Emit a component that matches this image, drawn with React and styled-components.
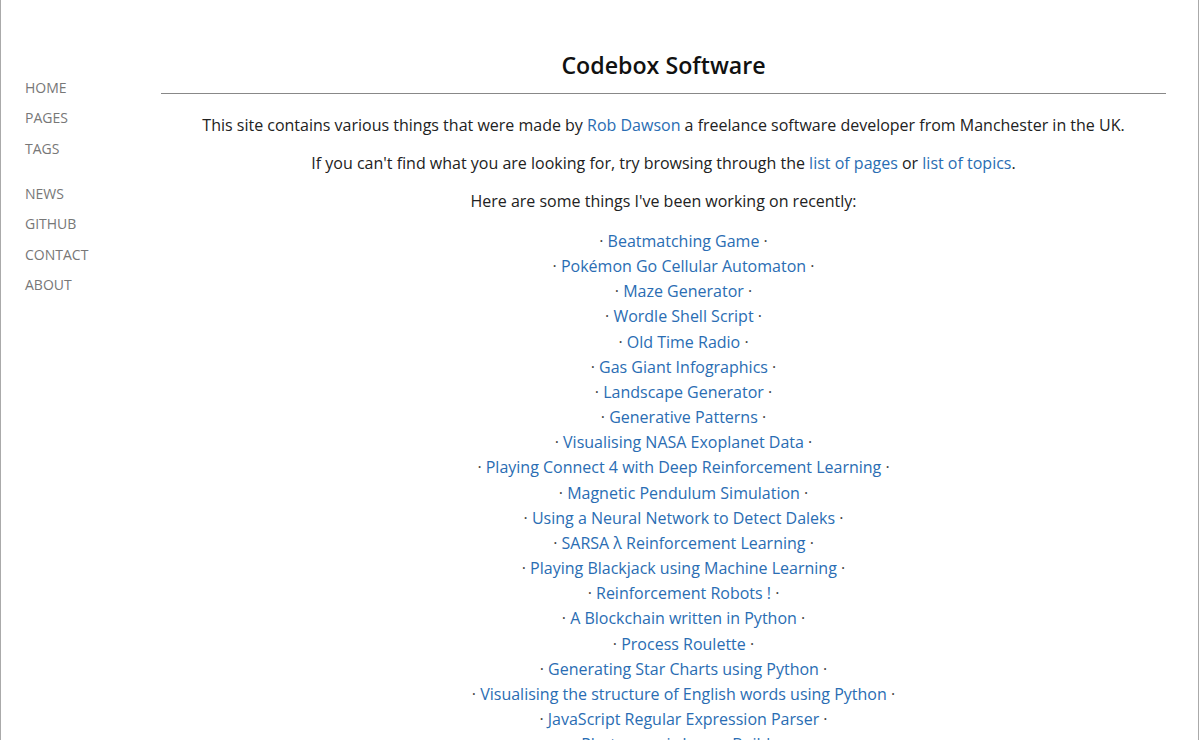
import React from "react";
import styled, { createGlobalStyle } from "styled-components";

const Global = createGlobalStyle`
  html, body { margin: 0; padding: 0; overflow: hidden; background: #fff; }
  body { font-family: "Open Sans", "DejaVu Sans", sans-serif; color: #222; }
  a { text-decoration: none; color: #2a6db3; }
`;

const Page = styled.div`
  box-sizing: border-box;
  width: 1199px;
  min-height: 100vh;
  border-left: 1px solid #aaa;
  border-right: 1px solid #aaa;
  display: flex;
`;

const Nav = styled.nav`
  box-sizing: border-box;
  width: 160px;
  padding: 73px 0 0 24px;
  display: flex;
  flex-direction: column;
  gap: 14.6px;
`;

const NavGroup = styled.ul`
  list-style: none;
  margin: 0;
  padding: 0;
`;

const NavItem = styled.li`
  font-size: 14px;
  line-height: 30.4px;
  text-transform: uppercase;
  a { color: #777; }
`;

const Main = styled.main`
  width: 1005px;
  padding-top: 49px;
  text-align: center;
`;

const Title = styled.h1`
  margin: 0;
  font-size: 23.2px;
  font-weight: 600;
  line-height: 32px;
  color: #111;
  padding-bottom: 12px;
  border-bottom: 1px solid #888;
`;

const Para = styled.p`
  margin: 20px 0 16px;
  font-size: 16px;
  line-height: 22px;
  & + & { margin-top: 0; }
`;

const RecentList = styled.ul`
  list-style: none;
  margin: 0;
  padding: 1px 0 0 40px;
`;

const RecentItem = styled.li`
  font-size: 16px;
  line-height: 25.16px;
  color: #444;
`;

const navGroups = [
  ["Home", "Pages", "Tags"],
  ["News", "Github", "Contact", "About"],
];

const recent = [
  "Beatmatching Game",
  "Pokémon Go Cellular Automaton",
  "Maze Generator",
  "Wordle Shell Script",
  "Old Time Radio",
  "Gas Giant Infographics",
  "Landscape Generator",
  "Generative Patterns",
  "Visualising NASA Exoplanet Data",
  "Playing Connect 4 with Deep Reinforcement Learning",
  "Magnetic Pendulum Simulation",
  "Using a Neural Network to Detect Daleks",
  "SARSA λ Reinforcement Learning",
  "Playing Blackjack using Machine Learning",
  "Reinforcement Robots !",
  "A Blockchain written in Python",
  "Process Roulette",
  "Generating Star Charts using Python",
  "Visualising the structure of English words using Python",
  "JavaScript Regular Expression Parser",
  "Photomosaic Image Builder",
  "Cellular Automata",
];

export default function App() {
  return (
    <>
      <Global />
      <Page>
        <Nav>
          {navGroups.map((g, i) => (
            <NavGroup key={i}>
              {g.map((n) => (
                <NavItem key={n}>
                  <a href="#">{n}</a>
                </NavItem>
              ))}
            </NavGroup>
          ))}
        </Nav>
        <Main>
          <Title>Codebox Software</Title>
          <Para>
            This site contains various things that were made by <a href="#">Rob Dawson</a> a freelance software developer from Manchester in the UK.
          </Para>
          <Para>
            If you can't find what you are looking for, try browsing through the <a href="#">list of pages</a> or <a href="#">list of topics</a>.
          </Para>
          <Para>Here are some things I've been working on recently:</Para>
          <RecentList>
            {recent.map((r) => (
              <RecentItem key={r}>
                · <a href="#">{r}</a> ·
              </RecentItem>
            ))}
          </RecentList>
        </Main>
      </Page>
    </>
  );
}
